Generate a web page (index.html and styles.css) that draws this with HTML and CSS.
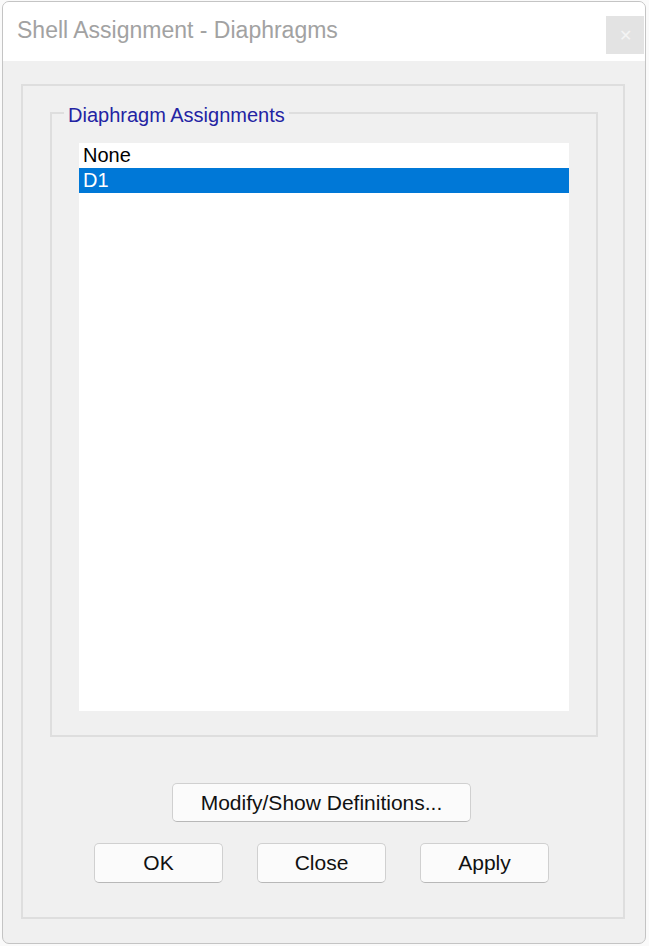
FILE: index.html
```html
<!DOCTYPE html>
<html lang="en">

<head>
    <meta charset="UTF-8">
    <meta name="viewport" content="width=device-width, initial-scale=1.0">
    <title>Shell Assignment - Diaphragms</title>
    <link rel="stylesheet" href="styles.css">
</head>

<body>
    <div class="window">
        <div class="titlebar">
            <span class="title">Shell Assignment - Diaphragms</span>
            <button class="close-x" title="Close">&#x2715;</button>
        </div>

        <div class="content">
            <div class="frame">
                <fieldset class="group">
                    <legend>Diaphragm Assignments</legend>
                    <ul class="list">
                        <li>None</li>
                        <li class="selected">D1</li>
                    </ul>
                </fieldset>

                <div class="actions">
                    <button class="btn wide">Modify/Show Definitions...</button>
                    <div class="row">
                        <button class="btn">OK</button>
                        <button class="btn">Close</button>
                        <button class="btn">Apply</button>
                    </div>
                </div>
            </div>
        </div>
    </div>
</body>

</html>
```

FILE: styles.css
```css
body {
    margin: 0;
    padding: 1px 3px 2px 2px;
    background-color: #fafafa;
    font-family: "Liberation Sans", Arial, sans-serif;
}

.window {
    height: 941px;
    border: 1px solid #c4c4c4;
    border-radius: 7px;
    background-color: #f0f0f0;
    overflow: hidden;
    display: flex;
    flex-direction: column;
}

.titlebar {
    height: 59px;
    background: #fff;
    display: flex;
    align-items: center;
    justify-content: space-between;
    padding-left: 14px;
}

.title {
    font-size: 23px;
    color: #a2a2a2;
    margin-top: -2px;
}

.close-x {
    width: 38px;
    height: 38px;
    margin: 7px 1px 0 0;
    border: none;
    background: #e3e3e3;
    color: #f4f4f4;
    font-size: 16px;
    padding: 0;
}

.content {
    flex: 1;
    padding: 23px 20px 24px 18px;
    display: flex;
}

.frame {
    flex: 1;
    border: 2px solid #dedede;
    padding: 0 25px 0 27px;
    display: flex;
    flex-direction: column;
}

.group {
    margin: 12px 0 0;
    height: 639px;
    box-sizing: border-box;
    border: 2px solid #dedede;
    padding: 16px 27px 24px 12px;
}

.group legend {
    font-size: 20px;
    color: #2323a3;
    padding: 6px 4px 0;
}

.list {
    height: 568px;
    list-style: none;
    margin: 0 0 0 15px;
    padding: 0;
    background: #fff;
}

.list li {
    height: 25px;
    line-height: 25px;
    font-size: 20px;
    padding-left: 4px;
    color: #000;
}

.list li.selected {
    background-color: #0078d7;
    color: #fff;
}

.actions {
    display: flex;
    flex-direction: column;
    align-items: center;
    margin: 46px 0 0 -5px;
    gap: 21px;
}

.row {
    display: flex;
    gap: 34px;
}

.btn {
    width: 129px;
    height: 40px;
    font-family: "Liberation Sans", Arial, sans-serif;
    font-size: 21px;
    color: #111;
    background: #fbfbfb;
    border: 1px solid #d0d0d0;
    border-bottom-color: #b8b8b8;
    border-radius: 5px;
    padding: 0;
}

.btn.wide {
    width: 299px;
    height: 39px;
}
```
